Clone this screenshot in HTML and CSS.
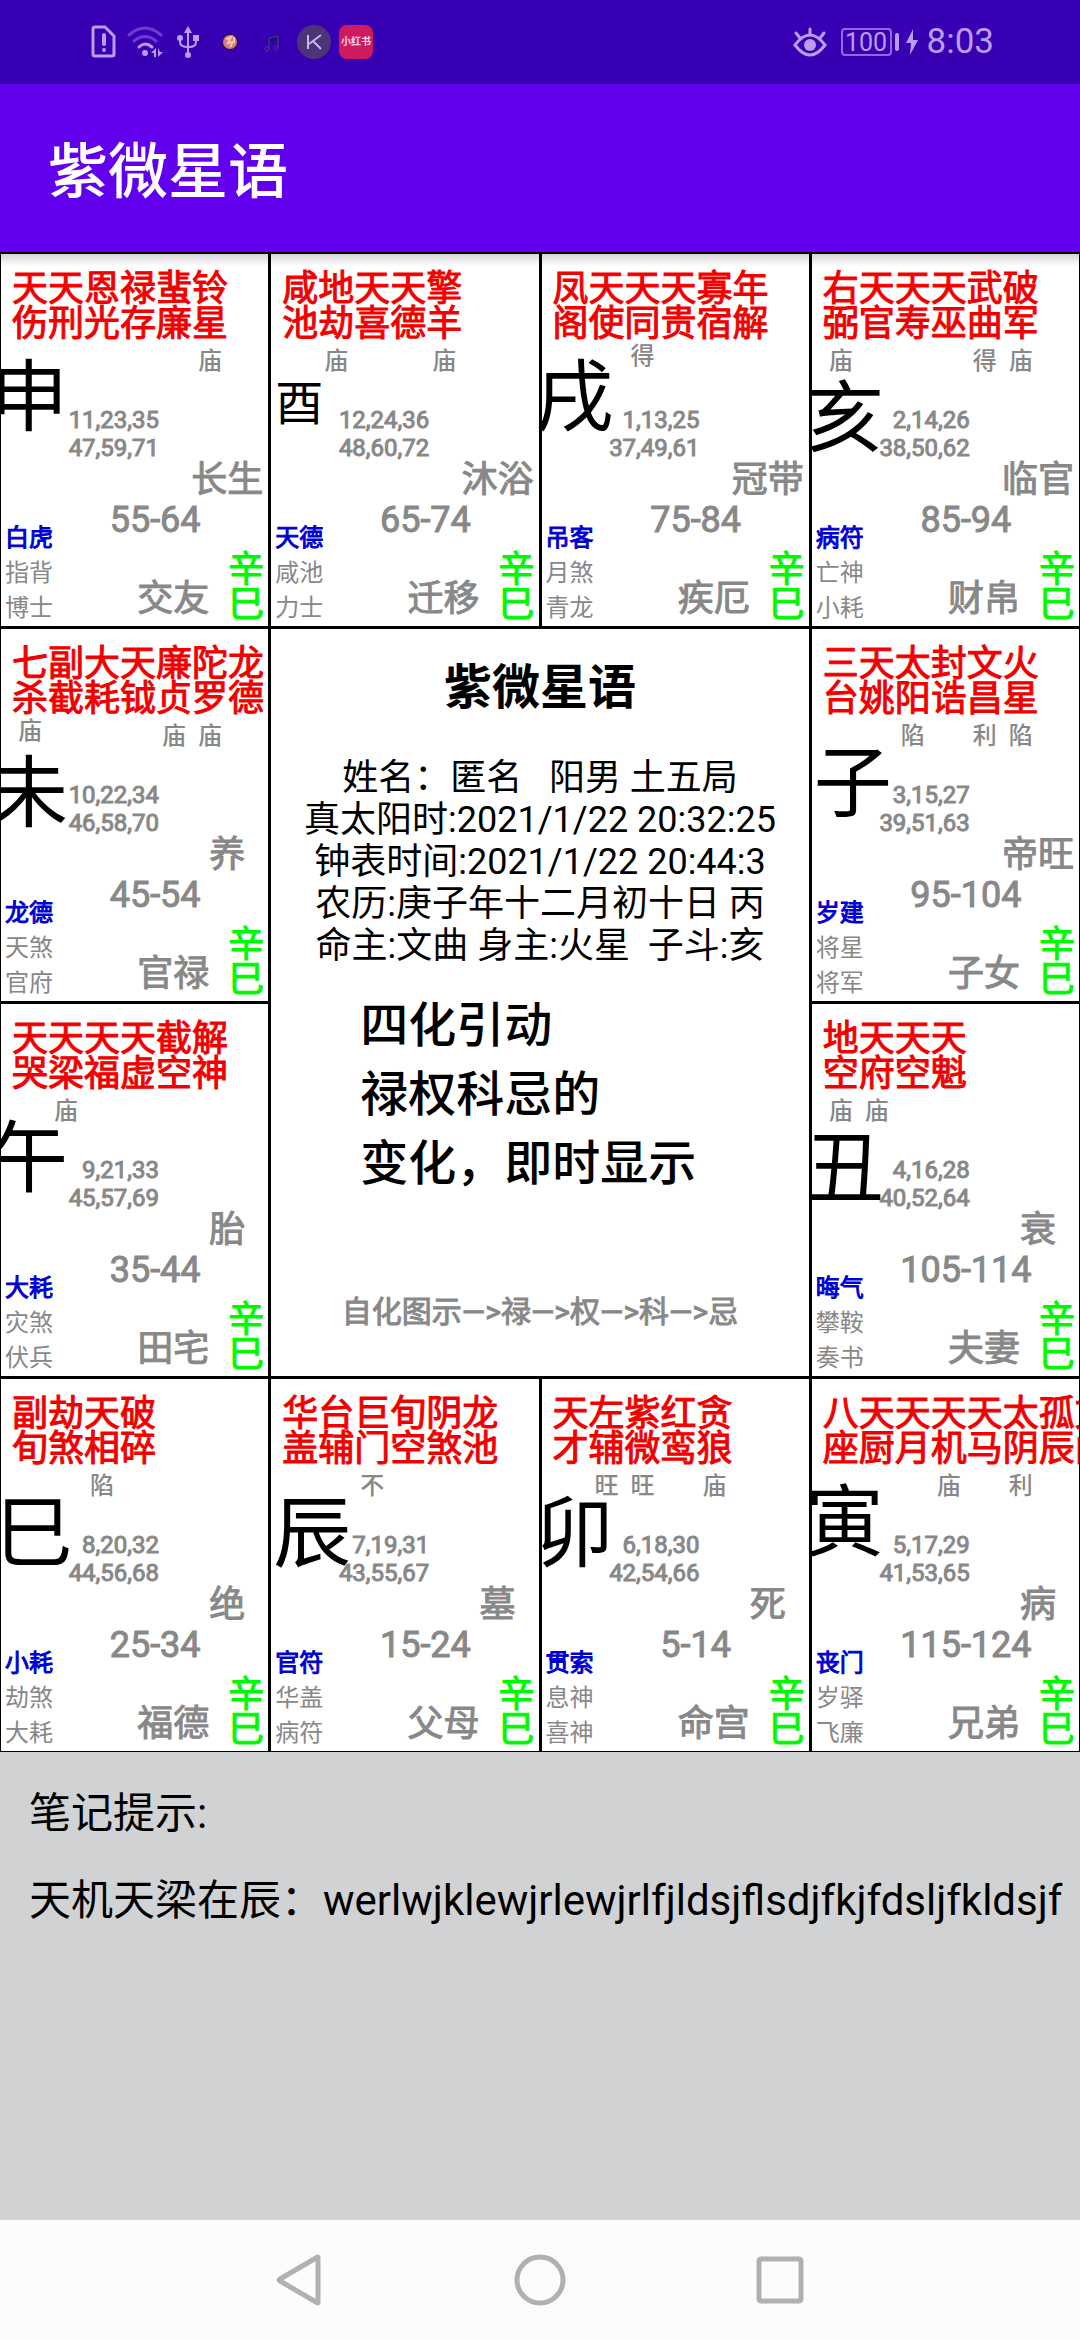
FILE: index.html
```html
<!DOCTYPE html>
<html lang="zh-CN">
<head>
<meta charset="utf-8">
<meta name="viewport" content="width=device-width">
<title>紫微星语</title>
<link rel="stylesheet" href="styles.css">
</head>
<body>
<div class="status">
  <div class="status-left">
    <svg class="slot" viewBox="0 0 42 34" aria-hidden="true"><path d="M12 2h10l9 9v18q0 2-2 2H12q-2 0-2-2V4q0-2 2-2z" fill="none" stroke="#b99df0" stroke-width="3"/><path d="M21 10v9" stroke="#b99df0" stroke-width="4" stroke-linecap="round"/><circle cx="21" cy="25" r="2" fill="#b99df0"/></svg>
    <svg class="slot" viewBox="0 0 42 34" aria-hidden="true"><g fill="none" stroke-linecap="round" stroke-width="3"><path d="M4 10q16-14 32 0" stroke="#6a3fcc"/><path d="M9 16q11-9 22 0" stroke="#6a3fcc"/><path d="M14 22q6-6 13 0" stroke="#b99df0"/></g><circle cx="20" cy="28" r="3" fill="#b99df0"/><path d="M26 28l5-5v9h-2v-4zM33 23v9l5-5h-3z" fill="#b99df0"/></svg>
    <svg class="slot" viewBox="0 0 42 34" aria-hidden="true"><g fill="none" stroke="#b99df0" stroke-width="2"><path d="M21 5v24M13 14v3q0 5 8 5h1q7 0 7-5v-3"/></g><path d="M21 1l4 7h-8z" fill="#b99df0"/><circle cx="13" cy="13" r="3" fill="#b99df0"/><path d="M26 10h6v6h-6z" fill="#b99df0"/><circle cx="21" cy="30" r="3" fill="#b99df0"/></svg>
    <svg class="slot" viewBox="0 0 42 34" aria-hidden="true"><circle cx="21" cy="17" r="8" fill="#2b1157"/><circle cx="21" cy="17" r="7" fill="#d87a78"/><path d="M17 14l5-2-3 6 5-1-3 5M25 12v6" fill="none" stroke="#f5c9a4" stroke-width="2"/></svg>
    <svg class="slot" viewBox="0 0 42 34" aria-hidden="true"><path d="M18 24V13l9-2v12M18 16l9-2" fill="none" stroke="#22107a" stroke-width="3"/><path d="M18 24V13l9-2v12" fill="none" stroke="#5a2fb8" stroke-width="1"/><circle cx="16" cy="24" r="2" fill="#22107a" stroke="#5a2fb8"/><circle cx="25" cy="23" r="2" fill="#22107a" stroke="#5a2fb8"/></svg>
    <svg class="slot" viewBox="0 0 42 34" aria-hidden="true"><circle cx="21" cy="17" r="17" fill="#4b3478"/><path d="M15 10v14M28 10L16 19M20 16l8 8" fill="none" stroke="#c9b6e8" stroke-width="2"/></svg>
    <span class="slot"><span class="redbook">小红书</span></span>
  </div>
  <div class="status-right">
    <svg class="eye" viewBox="0 0 34 32" aria-hidden="true"><path d="M2 19q15-20 30 0q-15 20-30 0z" fill="none" stroke="#b99df0" stroke-width="3"/><circle cx="17" cy="19" r="6" fill="#b99df0"/><path d="M17 3v6M3 7l4 5M31 7l-4 5" stroke="#b99df0" stroke-width="3" stroke-linecap="round"/></svg>
    <span class="battery">100</span><span class="nub"></span>
    <svg class="bolt" viewBox="0 0 12 26" aria-hidden="true"><path d="M7 0L0 14h5L4 26l8-15H7z" fill="#b99df0"/></svg>
    <time class="clock">8:03</time>
  </div>
</div>
<header class="appbar"><h1>紫微星语</h1></header>

<main class="chart">
  <section class="cell top">
    <ul class="stars"><li>天伤</li><li>天刑</li><li>恩光</li><li>禄存</li><li>蜚廉</li><li>铃星<small>庙</small></li></ul>
    <b class="branch near high">申</b>
    <p class="years">11,23,35<br>47,59,71</p>
    <p class="stage">长生</p>
    <div class="base"><ul class="gods"><li>白虎</li><li>指背</li><li>博士</li></ul><div class="mid"><p class="range">55-64</p><p class="palace">交友</p></div><p class="stem">辛巳</p></div>
  </section>
  <section class="cell top">
    <ul class="stars"><li>咸池</li><li>地劫<small>庙</small></li><li>天喜</li><li>天德</li><li>擎羊<small>庙</small></li></ul>
    <b class="branch small">酉</b>
    <p class="years">12,24,36<br>48,60,72</p>
    <p class="stage">沐浴</p>
    <div class="base"><ul class="gods"><li>天德</li><li>咸池</li><li>力士</li></ul><div class="mid"><p class="range">65-74</p><p class="palace">迁移</p></div><p class="stem">辛巳</p></div>
  </section>
  <section class="cell top">
    <ul class="stars"><li>凤阁</li><li>天使</li><li>天同<small class="up">得</small></li><li>天贵</li><li>寡宿</li><li>年解</li></ul>
    <b class="branch high">戌</b>
    <p class="years">1,13,25<br>37,49,61</p>
    <p class="stage">冠带</p>
    <div class="base"><ul class="gods"><li>吊客</li><li>月煞</li><li>青龙</li></ul><div class="mid"><p class="range">75-84</p><p class="palace">疾厄</p></div><p class="stem">辛巳</p></div>
  </section>
  <section class="cell top">
    <ul class="stars"><li>右弼<small>庙</small></li><li>天官</li><li>天寿</li><li>天巫</li><li>武曲<small>得</small></li><li>破军<small>庙</small></li></ul>
    <b class="branch low">亥</b>
    <p class="years">2,14,26<br>38,50,62</p>
    <p class="stage">临官</p>
    <div class="base"><ul class="gods"><li>病符</li><li>亡神</li><li>小耗</li></ul><div class="mid"><p class="range">85-94</p><p class="palace">财帛</p></div><p class="stem">辛巳</p></div>
  </section>

  <section class="cell">
    <ul class="stars"><li>七杀<small class="up">庙</small></li><li>副截</li><li>大耗</li><li>天钺</li><li>廉贞<small>庙</small></li><li>陀罗<small>庙</small></li><li>龙德</li></ul>
    <b class="branch near low">未</b>
    <p class="years">10,22,34<br>46,58,70</p>
    <p class="stage"><span>养</span></p>
    <div class="base"><ul class="gods"><li>龙德</li><li>天煞</li><li>官府</li></ul><div class="mid"><p class="range">45-54</p><p class="palace">官禄</p></div><p class="stem">辛巳</p></div>
  </section>
  <section class="center">
    <h2>紫微星语</h2>
    <p class="info">姓名：匿名   阳男 土五局
真太阳时:2021/1/22 20:32:25
钟表时间:2021/1/22 20:44:3
农历:庚子年十二月初十日 丙
命主:文曲 身主:火星  子斗:亥</p>
    <p class="slogan">四化引动<br>禄权科忌的<br>变化，即时显示</p>
    <p class="legend">自化图示—&gt;禄—&gt;权—&gt;科—&gt;忌</p>
  </section>
  <section class="cell">
    <ul class="stars"><li>三台</li><li>天姚</li><li>太阳<small>陷</small></li><li>封诰</li><li>文昌<small>利</small></li><li>火星<small>陷</small></li></ul>
    <b class="branch far">子</b>
    <p class="years">3,15,27<br>39,51,63</p>
    <p class="stage">帝旺</p>
    <div class="base"><ul class="gods"><li>岁建</li><li>将星</li><li>将军</li></ul><div class="mid"><p class="range">95-104</p><p class="palace">子女</p></div><p class="stem">辛巳</p></div>
  </section>

  <section class="cell">
    <ul class="stars"><li>天哭</li><li>天梁<small>庙</small></li><li>天福</li><li>天虚</li><li>截空</li><li>解神</li></ul>
    <b class="branch near">午</b>
    <p class="years">9,21,33<br>45,57,69</p>
    <p class="stage">胎</p>
    <div class="base"><ul class="gods"><li>大耗</li><li>灾煞</li><li>伏兵</li></ul><div class="mid"><p class="range">35-44</p><p class="palace">田宅</p></div><p class="stem">辛巳</p></div>
  </section>
  <section class="cell">
    <ul class="stars"><li>地空<small>庙</small></li><li>天府<small>庙</small></li><li>天空</li><li>天魁</li></ul>
    <b class="branch low">丑</b>
    <p class="years">4,16,28<br>40,52,64</p>
    <p class="stage">衰</p>
    <div class="base"><ul class="gods"><li>晦气</li><li>攀鞍</li><li>奏书</li></ul><div class="mid"><p class="range">105-114</p><p class="palace">夫妻</p></div><p class="stem">辛巳</p></div>
  </section>

  <section class="cell">
    <ul class="stars"><li>副旬</li><li>劫煞</li><li>天相<small>陷</small></li><li>破碎</li></ul>
    <b class="branch">巳</b>
    <p class="years">8,20,32<br>44,56,68</p>
    <p class="stage">绝</p>
    <div class="base"><ul class="gods"><li>小耗</li><li>劫煞</li><li>大耗</li></ul><div class="mid"><p class="range">25-34</p><p class="palace">福德</p></div><p class="stem">辛巳</p></div>
  </section>
  <section class="cell">
    <ul class="stars"><li>华盖</li><li>台辅</li><li>巨门<small>不</small></li><li>旬空</li><li>阴煞</li><li>龙池</li></ul>
    <b class="branch far">辰</b>
    <p class="years">7,19,31<br>43,55,67</p>
    <p class="stage">墓</p>
    <div class="base"><ul class="gods"><li>官符</li><li>华盖</li><li>病符</li></ul><div class="mid"><p class="range">15-24</p><p class="palace">父母</p></div><p class="stem">辛巳</p></div>
  </section>
  <section class="cell">
    <ul class="stars"><li>天才</li><li>左辅<small>旺</small></li><li>紫微<small>旺</small></li><li>红鸾</li><li>贪狼<small>庙</small></li></ul>
    <b class="branch">卯</b>
    <p class="years">6,18,30<br>42,54,66</p>
    <p class="stage">死</p>
    <div class="base"><ul class="gods"><li>贯索</li><li>息神</li><li>喜神</li></ul><div class="mid"><p class="range">5-14</p><p class="palace">命宫</p></div><p class="stem">辛巳</p></div>
  </section>
  <section class="cell">
    <ul class="stars"><li>八座</li><li>天厨</li><li>天月</li><li>天机<small>庙</small></li><li>天马</li><li>太阴<small>利</small></li><li>孤辰</li><li>文曲</li></ul>
    <b class="branch high">寅</b>
    <p class="years">5,17,29<br>41,53,65</p>
    <p class="stage">病</p>
    <div class="base"><ul class="gods"><li>丧门</li><li>岁驿</li><li>飞廉</li></ul><div class="mid"><p class="range">115-124</p><p class="palace">兄弟</p></div><p class="stem">辛巳</p></div>
  </section>
</main>

<section class="notes">
  <p>笔记提示:</p>
  <p>天机天梁在辰：werlwjklewjrlewjrlfjldsjflsdjfkjfdsljfkldsjf</p>
</section>

<nav class="navbar">
  <button type="button" aria-label="返回"><svg viewBox="0 0 56 56"><path d="M46 6v44q0 2-2 0L8 29q-2-1 0-2L44 6q2-2 2 0z"/></svg></button>
  <button type="button" aria-label="主页"><svg viewBox="0 0 56 56"><circle cx="28" cy="28" r="23"/></svg></button>
  <button type="button" aria-label="最近任务"><svg viewBox="0 0 56 56"><rect x="7" y="7" width="42" height="42" rx="2"/></svg></button>
</nav>
</body>
</html>
```

FILE: styles.css
```css
* { box-sizing: border-box; }

body {
  margin: 0;
  min-height: 100vh;
  display: flex;
  flex-direction: column;
  font-family: Roboto, "Noto Sans CJK SC", sans-serif;
  color: #000;
  background: #d1d2d4;
}

h1, h2, p, ul { margin: 0; padding: 0; }
li { list-style: none; }

/* status bar */
.status {
  height: 84px;
  padding: 0 86px 0 83px;
  display: flex;
  align-items: center;
  justify-content: space-between;
  background: #3700b3;
  color: #b99df0;
}
.status-left, .status-right { display: flex; align-items: center; }
.slot { width: 42px; height: 34px; display: flex; justify-content: center; }
.redbook {
  width: 34px;
  height: 34px;
  border-radius: 8px;
  background: #cf1b5d;
  color: #f3d5ea;
  font-size: 10px;
  font-weight: 700;
  line-height: 34px;
  text-align: center;
  white-space: nowrap;
}
.eye { width: 34px; height: 32px; margin-right: 14px; }
.battery {
  width: 51px;
  height: 28px;
  border: 2px solid #8e6bdc;
  border-radius: 4px;
  font-size: 25px;
  line-height: 25px;
  text-align: center;
}
.nub { width: 4px; height: 18px; margin: 0 7px 0 3px; border-radius: 2px; background: #b99df0; }
.bolt { width: 12px; height: 26px; margin-right: 9px; }
.clock { font-size: 35px; line-height: 40px; }

/* app bar */
.appbar {
  height: 168px;
  padding: 10px 48px 0;
  display: flex;
  align-items: center;
  background: #6200ee;
  color: #fff;
}
.appbar h1 { font-size: 60px; font-weight: 500; line-height: 72px; }

/* chart */
.chart {
  display: grid;
  grid-template-columns: repeat(4, minmax(0, 1fr));
  grid-auto-rows: minmax(372px, auto);
  gap: 3px;
  padding: 2px 1px 1px;
  background: #000;
}
.cell {
  position: relative;
  display: flex;
  flex-direction: column;
  background: #fff;
  color: #888;
}
.cell.top { background: linear-gradient(#d4d4d4, #fff 12px); }

/* the chart's emphasised texts: regular letterforms with a thickened outline */
.stars li, .years, .stage, .range, .palace, .stem, .legend, .gods li:first-child {
  font-weight: 400;
  -webkit-text-stroke: 1px currentColor;
}

.stars {
  height: 121px;
  padding: 18px 0 0 11px;
  display: flex;
  overflow: hidden;
  color: #f20000;
  font-size: 36px;
  line-height: 35px;
}
.stars li { flex: 0 0 36px; width: 36px; word-break: break-all; text-align: center; }
.stars small {
  display: block;
  padding-top: 5px;
  color: #888;
  font-size: 24px;
  font-weight: 500;
  line-height: 28px;
  -webkit-text-stroke: 0;
}
.stars .up { padding-top: 0; }

.branch {
  position: absolute;
  top: 117px;
  left: -6px;
  color: #000;
  font-size: 78px;
  font-weight: 400;
  line-height: 78px;
}
.branch.high { top: 106px; }
.branch.low { top: 127px; }
.branch.near { left: -11px; }
.branch.far { left: 2px; }
.branch.small { top: 126px; left: 4px; font-size: 48px; line-height: 48px; }

.years {
  width: 158px;
  margin-top: 31px;
  font-size: 24px;
  line-height: 28px;
  text-align: right;
  position: relative;
}
.stage {
  align-self: flex-end;
  width: 72px;
  margin: 2px 5px 0 0;
  font-size: 36px;
  line-height: 33px;
  text-align: center;
}
.base { flex: 1; display: flex; align-items: flex-end; padding: 0 4px; }
.gods { width: 48px; font-size: 24px; line-height: 35px; }
.gods li:first-child { color: #0000d2; }
.mid {
  flex: 1;
  align-self: stretch;
  display: flex;
  flex-direction: column;
  justify-content: space-between;
  padding: 5px 0 9px;
  font-size: 36px;
  line-height: 36px;
}
.range { padding-left: 29px; text-align: center; }
.palace { padding-right: 19px; text-align: right; }
.stem {
  width: 36px;
  padding-bottom: 3px;
  color: #00f800;
  font-size: 36px;
  line-height: 35px;
  word-break: break-all;
}

/* centre panel */
.center {
  grid-column: 2 / 4;
  grid-row: 2 / 4;
  padding: 30px 0 44px;
  display: flex;
  flex-direction: column;
  background: #fff;
}
.center h2 { font-size: 48px; font-weight: 700; line-height: 58px; text-align: center; }
.info { margin-top: 40px; font-size: 36px; line-height: 42px; text-align: center; white-space: pre; }
.slogan { margin: 24px 0 0 89px; font-size: 48px; font-weight: 500; line-height: 69px; }
.legend { margin-top: auto; color: #888; font-size: 30px; line-height: 40px; text-align: center; }

/* notes */
.notes {
  flex: 1;
  padding: 32px 0 0 29px;
  display: flex;
  flex-direction: column;
  gap: 27px;
  overflow: hidden;
  font-size: 42px;
  line-height: 60px;
  white-space: nowrap;
}

/* system navigation */
.navbar { height: 120px; display: flex; justify-content: center; background: #fcfcfc; }
.navbar button {
  width: 240px;
  padding: 0;
  border: 0;
  background: none;
  display: flex;
  align-items: center;
  justify-content: center;
}
.navbar svg { width: 56px; height: 56px; fill: none; stroke: #b1b1b1; stroke-width: 5; stroke-linejoin: round; }
```
